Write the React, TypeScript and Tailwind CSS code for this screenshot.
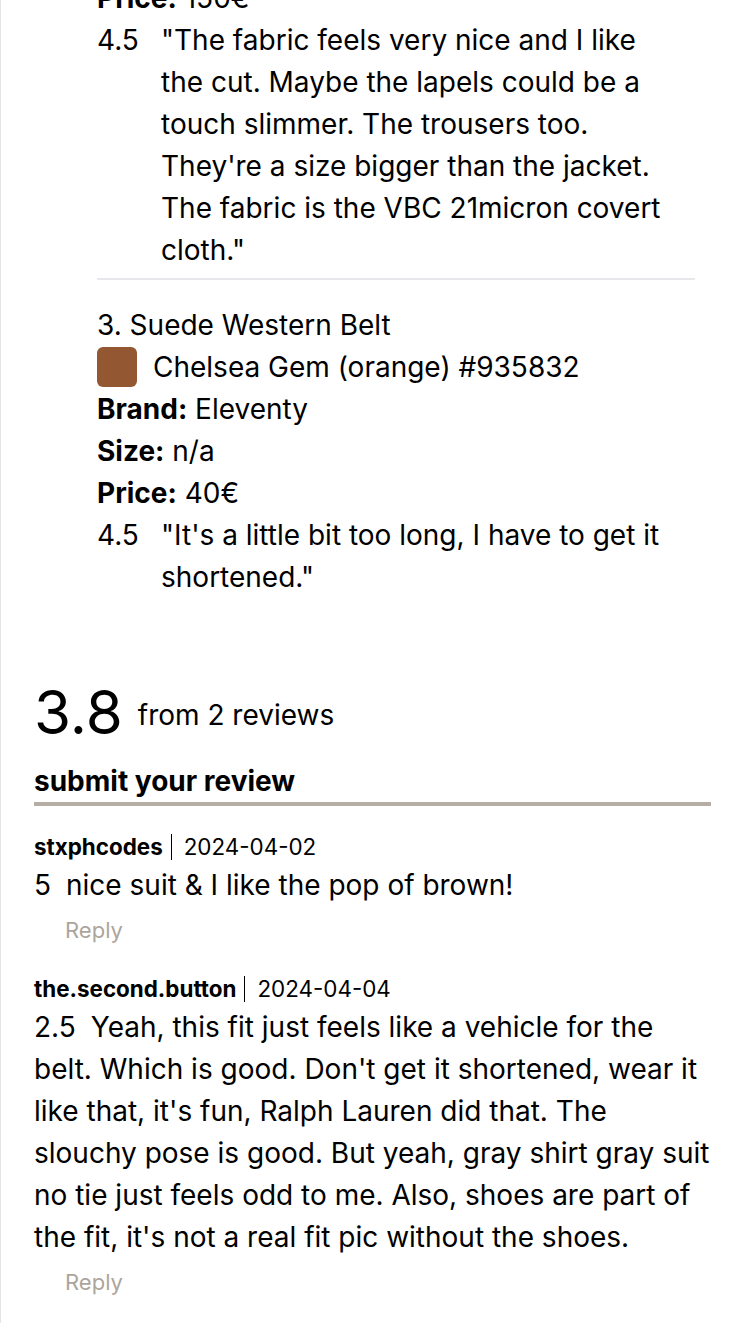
import React from 'react';

type Item = {
  title?: string;
  swatch?: { color: string; label: string };
  brand?: string;
  size?: string;
  price: string;
  rating: string;
  comment: string;
};

const ITEMS: Item[] = [
  {
    price: '150€',
    rating: '4.5',
    comment:
      '"The fabric feels very nice and I like the cut. Maybe the lapels could be a touch slimmer. The trousers too. They\'re a size bigger than the jacket. The fabric is the VBC 21micron covert cloth."',
  },
  {
    title: '3. Suede Western Belt',
    swatch: { color: '#935832', label: 'Chelsea Gem (orange) #935832' },
    brand: 'Eleventy',
    size: 'n/a',
    price: '40€',
    rating: '4.5',
    comment: '"It\'s a little bit too long, I have to get it shortened."',
  },
];

const REVIEWS = [
  {
    user: 'stxphcodes',
    date: '2024-04-02',
    rating: '5',
    text: 'nice suit & I like the pop of brown!',
  },
  {
    user: 'the.second.button',
    date: '2024-04-04',
    rating: '2.5',
    text: "Yeah, this fit just feels like a vehicle for the belt. Which is good. Don't get it shortened, wear it like that, it's fun, Ralph Lauren did that. The slouchy pose is good. But yeah, gray shirt gray suit no tie just feels odd to me. Also, shoes are part of the fit, it's not a real fit pic without the shoes.",
  },
];

function ProductItem({ item }: { item: Item }) {
  return (
    <div className="flex flex-col">
      {item.title && <div>{item.title}</div>}
      {item.swatch && (
        <div className="flex items-center gap-4">
          <div className="w-10 h-10 rounded-md" style={{ backgroundColor: item.swatch.color }} />
          <span>{item.swatch.label}</span>
        </div>
      )}
      {item.brand && (
        <div>
          <span className="font-bold">Brand:</span> {item.brand}
        </div>
      )}
      {item.size && (
        <div>
          <span className="font-bold">Size:</span> {item.size}
        </div>
      )}
      <div>
        <span className="font-bold">Price:</span> {item.price}
      </div>
      <div className="flex">
        <span className="w-16 shrink-0">{item.rating}</span>
        <p className="max-w-[510px]">{item.comment}</p>
      </div>
    </div>
  );
}

export default function App() {
  return (
    <div className="min-h-screen bg-white text-black font-['Inter','Liberation_Sans',sans-serif] overflow-hidden">
      <div className="-mt-[23px] min-h-[1346px] border-l border-[#e4e4e7] rounded-tl-[24px] pl-[33px] pr-[32px] pb-[27px]">
        {/* outfit items */}
        <div className="pl-[63px] pr-[16px] text-[28px] leading-[42px]">
          <ProductItem item={ITEMS[0]} />
          <div className="mt-[7px] h-[2px] bg-[#e7e7ec]" />
          <div className="mt-[24px]">
            <ProductItem item={ITEMS[1]} />
          </div>
        </div>

        {/* rating summary */}
        <div className="mt-[84px] flex items-center gap-[15px]">
          <span className="text-[60px] leading-[60px]">3.8</span>
          <span className="text-[28px] leading-[32px] mt-[6px]">from 2 reviews</span>
        </div>
        <div className="mt-[23px] pb-[5px] border-b-4 border-[#b6aea4] text-[28px] leading-[32px] font-bold">
          submit your review
        </div>

        {/* reviews */}
        <div className="flex flex-col">
          {REVIEWS.map((r, i) => (
            <div key={i} className={i === 0 ? 'mt-[24px]' : 'mt-[28px]'}>
              <div className="flex items-center text-[22.4px] leading-[34px]">
                <span className="font-bold">{r.user}</span>
                <span className="ml-[8px] mr-[12px] h-[26px] w-px bg-black" />
                <span>{r.date}</span>
              </div>
              <p className="text-[28px] leading-[42px]">
                <span className="mr-[15px]">{r.rating}</span>
                {r.text}
              </p>
              <div className="mt-[10px] ml-[31px] text-[22px] leading-[28px] text-[#ada59c]">Reply</div>
            </div>
          ))}
        </div>
      </div>
    </div>
  );
}
